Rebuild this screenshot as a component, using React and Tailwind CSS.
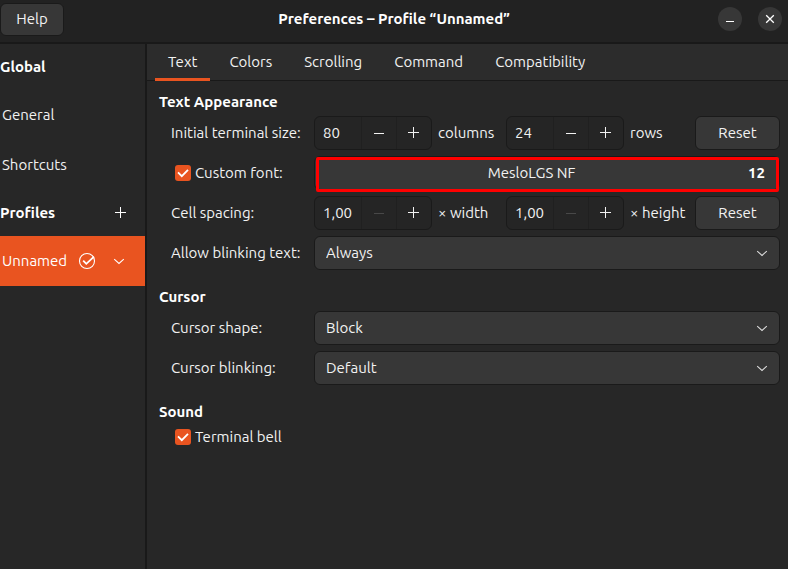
import { useState } from "react";

const TABS = ["Text", "Colors", "Scrolling", "Command", "Compatibility"];

const BUTTON =
  "rounded-md border border-[#1a1a1a] bg-[#373737] text-center text-[#f2f2f2]";

function Minus() {
  return (
    <svg width="16" height="16" viewBox="0 0 16 16" fill="currentColor" aria-hidden="true">
      <rect x="3" y="8" width="10" height="1" />
    </svg>
  );
}

function Plus() {
  return (
    <svg width="16" height="16" viewBox="0 0 16 16" fill="currentColor" aria-hidden="true">
      <rect x="2" y="7" width="11" height="1" />
      <rect x="7" y="2" width="1" height="11" />
    </svg>
  );
}

function Chevron() {
  return (
    <svg width="16" height="16" viewBox="0 0 16 16" fill="none" stroke="currentColor" strokeWidth="1.1" aria-hidden="true">
      <path d="M3.2 6.2 L8 10.4 L12.8 6.2" />
    </svg>
  );
}

function SpinBox({ id, label, value, atMinimum }) {
  return (
    <div className="flex h-[34px] w-[118px] rounded-md border border-[#1a1a1a] bg-[#252525] text-[#f2f2f2]">
      <input
        id={id}
        aria-label={label}
        type="text"
        inputMode="decimal"
        defaultValue={value}
        className="w-[46px] min-w-0 bg-transparent pl-2 outline-none"
      />
      <button
        type="button"
        aria-label={`Decrease ${label}`}
        disabled={atMinimum}
        className="flex flex-1 items-center justify-center border-l border-[#202020] disabled:text-[#484848]"
      >
        <Minus />
      </button>
      <button
        type="button"
        aria-label={`Increase ${label}`}
        className="flex flex-1 items-center justify-center border-l border-[#202020]"
      >
        <Plus />
      </button>
    </div>
  );
}

function Dropdown({ id, options }) {
  return (
    <div className="relative">
      <select
        id={id}
        className="h-[34px] w-full appearance-none rounded-md border border-[#1a1a1a] bg-[#373737] px-[11px] text-[#f2f2f2] outline-none"
      >
        {options.map((option) => (
          <option key={option}>{option}</option>
        ))}
      </select>
      <span className="pointer-events-none absolute inset-y-0 right-2.5 flex items-center text-[#dedede]">
        <Chevron />
      </span>
    </div>
  );
}

function CheckOption({ id, label }) {
  return (
    <div className="flex items-center gap-1 pl-1">
      <span className="relative flex">
        <input
          id={id}
          type="checkbox"
          defaultChecked
          className="peer size-4 appearance-none rounded-[3px] bg-[#373737] checked:bg-[#e95420]"
        />
        <svg
          className="pointer-events-none absolute inset-0 hidden text-white peer-checked:block"
          width="16"
          height="16"
          viewBox="0 0 16 16"
          fill="none"
          stroke="currentColor"
          strokeWidth="1.8"
          aria-hidden="true"
        >
          <path d="M3 7.3 L6.8 11.2 L13 4.8" />
        </svg>
      </span>
      <label htmlFor={id}>{label}</label>
    </div>
  );
}

function SizeRow({ id, title, first, second, resetLabel, atMinimum }) {
  return (
    <>
      <label htmlFor={id}>{title}</label>
      <div className="flex items-center">
        <div className="flex flex-1 items-center">
          <div className="flex w-[192px] items-center gap-1.5">
            <SpinBox id={id} label={first.unit} value={first.value} atMinimum={atMinimum} />
            <span>{first.unit}</span>
          </div>
          <div className="flex items-center gap-1.5">
            <SpinBox id={`${id}-second`} label={second.unit} value={second.value} atMinimum={atMinimum} />
            <span className="whitespace-nowrap">{second.unit}</span>
          </div>
        </div>
        <button type="button" aria-label={resetLabel} className={`${BUTTON} h-[34px] w-[85px]`}>
          Reset
        </button>
      </div>
    </>
  );
}

function Section({ title, children }) {
  return (
    <section>
      <h2 className="font-bold leading-5 text-white">{title}</h2>
      {children}
    </section>
  );
}

const GRID = "mt-1 grid grid-cols-[143px_1fr] auto-rows-[34px] items-center gap-y-1.5 pl-3";

export default function App() {
  const [tab, setTab] = useState("Text");

  return (
    <div className="flex min-h-screen flex-col bg-[#272727] font-['Ubuntu','Noto_Sans',sans-serif] text-[15px] leading-5 text-[#f2f2f2]">
      <header className="grid h-11 grid-cols-[1fr_auto_1fr] items-center border-b-2 border-[#191919] bg-[#222222] pb-1">
        <button type="button" className={`${BUTTON} h-[33px] w-16 justify-self-start`}>
          Help
        </button>
        <h1 className="font-bold text-white">Preferences – Profile “Unnamed”</h1>
        <div className="flex gap-4 justify-self-end pr-1.5">
          <button
            type="button"
            aria-label="Minimize"
            className="flex size-6 items-center justify-center rounded-full bg-[#373737] text-white"
          >
            <svg width="16" height="16" viewBox="0 0 16 16" fill="currentColor" aria-hidden="true">
              <rect x="4" y="10" width="8" height="1" />
            </svg>
          </button>
          <button
            type="button"
            aria-label="Close"
            className="flex size-6 items-center justify-center rounded-full bg-[#373737] text-white"
          >
            <svg width="16" height="16" viewBox="0 0 16 16" fill="none" stroke="currentColor" strokeWidth="1.3" aria-hidden="true">
              <path d="M4.2 4.2 L11.8 11.8 M11.8 4.2 L4.2 11.8" />
            </svg>
          </button>
        </div>
      </header>

      <div className="flex flex-1">
        <aside className="w-[147px] shrink-0 border-r-2 border-[#191919]">
          <h2 className="flex h-[46px] items-center font-bold text-white">Global</h2>
          <nav aria-label="Global">
            <a href="#general" className="flex h-[50px] items-center pl-0.5">General</a>
            <a href="#shortcuts" className="flex h-[50px] items-center pl-0.5">Shortcuts</a>
          </nav>
          <div className="flex h-[46px] items-center justify-between pr-4">
            <h2 className="font-bold text-white">Profiles</h2>
            <button type="button" aria-label="Add profile" className="text-white">
              <Plus />
            </button>
          </div>
          <div className="flex h-[50px] items-center bg-[#e95420] pl-0.5 pr-[18px] text-white">
            <a href="#unnamed" aria-current="page" className="flex-1">Unnamed</a>
            <svg width="18" height="18" viewBox="0 0 18 18" fill="none" stroke="currentColor" aria-label="Default profile" role="img">
              <circle cx="9" cy="9" r="7.5" strokeWidth="1.1" />
              <path d="M5.2 8.6 L8.3 11.8 L16 4.6" strokeWidth="1.8" />
            </svg>
            <button type="button" aria-label="Profile menu" className="ml-[15px]">
              <Chevron />
            </button>
          </div>
        </aside>

        <main className="min-w-0 flex-1">
          <div role="tablist" className="flex h-[37px] gap-1.5 border-b border-[#191919] bg-[#2c2c2c] pl-2">
            {TABS.map((name) => (
              <button
                key={name}
                type="button"
                role="tab"
                aria-selected={tab === name}
                onClick={() => setTab(name)}
                className="-mb-px border-b-3 border-transparent px-[13px] pt-0.5 aria-selected:border-[#e95420]"
              >
                {name}
              </button>
            ))}
          </div>

          <div className="flex flex-col gap-[17px] py-[11px] pl-3 pr-2">
            <Section title="Text Appearance">
              <div className={GRID}>
                <SizeRow
                  id="terminal-size"
                  title="Initial terminal size:"
                  first={{ value: "80", unit: "columns" }}
                  second={{ value: "24", unit: "rows" }}
                  resetLabel="Reset size"
                />
                <CheckOption id="custom-font" label="Custom font:" />
                <div className="relative">
                  <button
                    type="button"
                    className="flex h-[34px] w-full items-center rounded-md border border-[#1a1a1a] bg-[#373737] pr-3.5"
                  >
                    <span className="flex-1">MesloLGS NF</span>
                    <span className="font-bold text-white">12</span>
                  </button>
                  <span className="pointer-events-none absolute -bottom-0.5 left-0.5 right-px top-px rounded-[2px] border-3 border-[#ff0000]" />
                </div>
                <SizeRow
                  id="cell-spacing"
                  title="Cell spacing:"
                  first={{ value: "1,00", unit: "× width" }}
                  second={{ value: "1,00", unit: "× height" }}
                  resetLabel="Reset spacing"
                  atMinimum
                />
                <label htmlFor="blinking-text">Allow blinking text:</label>
                <Dropdown id="blinking-text" options={["Always", "Never", "When focused", "When unfocused"]} />
              </div>
            </Section>

            <Section title="Cursor">
              <div className={GRID}>
                <label htmlFor="cursor-shape">Cursor shape:</label>
                <Dropdown id="cursor-shape" options={["Block", "I-Beam", "Underline"]} />
                <label htmlFor="cursor-blinking">Cursor blinking:</label>
                <Dropdown id="cursor-blinking" options={["Default", "Enabled", "Disabled"]} />
              </div>
            </Section>

            <Section title="Sound">
              <div className="mt-[5px] pl-3">
                <CheckOption id="terminal-bell" label="Terminal bell" />
              </div>
            </Section>
          </div>
        </main>
      </div>
    </div>
  );
}
